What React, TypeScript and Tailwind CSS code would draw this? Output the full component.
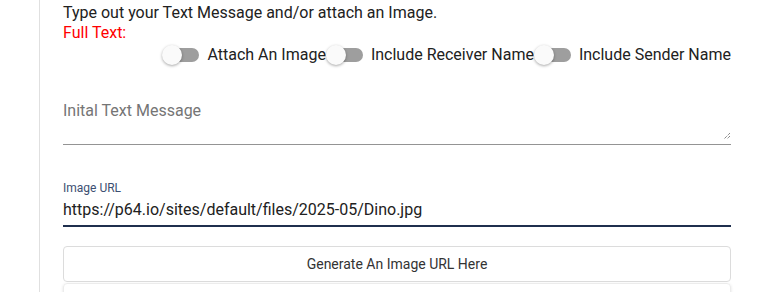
import React from "react";

function Toggle({ label }: { label: string }) {
  return (
    <label className="flex items-center">
      <span className="relative mr-[7px] flex h-5 w-[38px] items-center">
        <span className="ml-[3px] h-[14px] w-[34px] rounded-full bg-[#9e9e9e]" />
        <span className="absolute left-0 top-0 h-5 w-5 rounded-full bg-[#fafafa] shadow-[0_1px_3px_rgba(0,0,0,0.35)]" />
      </span>
      <span className="text-[16px] text-[#212121]">{label}</span>
    </label>
  );
}

export default function App() {
  return (
    <div
      className="h-[292px] w-[759px] overflow-hidden bg-white"
      style={{ fontFamily: "Roboto, 'Liberation Sans', sans-serif" }}
    >
      <div className="ml-[39px] h-full border-l border-[#e0e0e0] pl-[23px] pr-[28px] pt-[3px]">
        <p className="text-[16px] leading-5 text-[#212121]">
          Type out your Text Message and/or attach an Image.
        </p>
        <p className="text-[16px] leading-5 text-[#ff0000]">Full Text:</p>
        <div className="flex justify-end">
          <Toggle label="Attach An Image" />
          <Toggle label="Include Receiver Name" />
          <Toggle label="Include Sender Name" />
        </div>

        <div className="relative mt-[27px] h-[51px] border-b border-[#949494]">
          <span className="absolute left-0 top-[5px] text-[16px] text-[#757575]">
            Inital Text Message
          </span>
          <svg
            className="absolute right-0 bottom-[4px]"
            width="8"
            height="8"
            viewBox="0 0 8 8"
          >
            <path d="M7 1L1 7M7 4L4 7" stroke="#555" strokeWidth="1" strokeDasharray="1 1" />
          </svg>
        </div>

        <div className="mt-[35px] border-b-2 border-[#1f2f4d] pb-[5px]">
          <div className="text-[12px] leading-4 text-[#3c4f72]">Image URL</div>
          <div className="mt-[4px] text-[16px] leading-5 text-[#212121]">
            https://p64.io/sites/default/files/2025-05/Dino.jpg
          </div>
        </div>

        <button className="mt-[19px] flex h-[36px] w-full items-center justify-center rounded border border-[#dcdcdc] bg-white text-[14px] text-[#333]">
          Generate An Image URL Here
        </button>
        <div className="mt-[1px] h-10 w-full rounded border border-[#ececec] shadow-[0_1px_3px_rgba(0,0,0,0.12)]" />
      </div>
    </div>
  );
}
